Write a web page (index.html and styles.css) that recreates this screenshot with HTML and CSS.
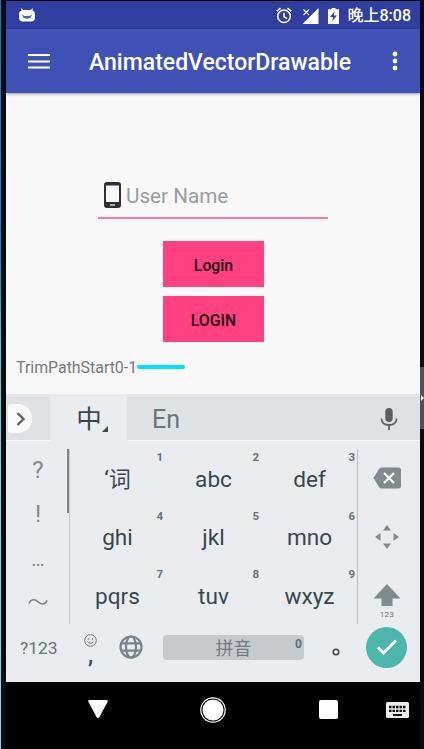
FILE: index.html
```html
<!DOCTYPE html>
<html lang="en">
<head>
<meta charset="utf-8">
<title>AnimatedVectorDrawable</title>
<link rel="stylesheet" href="styles.css">
</head>
<body>
<div class="desktop">
  <div class="phone">
    <header class="status">
      <svg class="bug" width="16" height="14" viewBox="0 0 16 14"><path fill="#fff" d="M2.200 0 4.300 2h7.400L13.800 0 13.500 2.400Q16 3 16 6v3.500q0 4-4 4H4Q0 13.500 0 9.500V6Q0 3 2.500 2.400z"/><path fill="#5562b2" d="M3 6.500 5.500 8h5L13 6.500 11.800 9.500Q8 12 4.200 9.500z"/></svg>
      <div class="tray">
        <svg width="16" height="17" viewBox="0 0 16 17"><g fill="none" stroke="#fff" stroke-width="1.500"><circle cx="8" cy="9.300" r="6.300"/><path d="M.8 4.200 4.500 1.200M15.200 4.200 11.500 1.200M8 5.800v4l3 1.700"/></g></svg>
        <svg width="17" height="16" viewBox="0 0 17 16"><path fill="#fff" d="M16.500 0v16H.5z"/><path stroke="#303f9f" stroke-width="2.600" d="m1.500 1.500 5.500 5.500M7 1.500 1.500 7"/><path stroke="#fff" stroke-width="1.200" d="m1.500 1.500 5.500 5.500M7 1.500 1.500 7"/></svg>
        <svg width="11" height="16" viewBox="0 0 11 16"><path fill="#fff" d="M3.500 0h4v1.300H11V16H0V1.300h3.500z"/><path fill="#303f9f" d="M6.500 3.500 2 9h3l-.7 4L9 7.600H6z"/></svg>
        <span class="clock">晚上8:08</span>
      </div>
    </header>
    <div class="toolbar">
      <svg width="22" height="16" viewBox="0 0 22 16"><path stroke="#fff" stroke-width="2" d="M0 2h22M0 8.500h22M0 14.500h22"/></svg>
      <h1>AnimatedVectorDrawable</h1>
      <svg width="6" height="20" viewBox="0 0 6 20"><g fill="#fff"><circle cx="3" cy="3" r="2.400"/><circle cx="3" cy="10" r="2.400"/><circle cx="3" cy="17" r="2.400"/></g></svg>
    </div>
    <main class="content">
      <div class="field">
        <svg width="17" height="26" viewBox="0 0 17 26"><path fill="#303034" fill-rule="evenodd" d="M3 0h11q3 0 3 3v20q0 3-3 3H3q-3 0-3-3V3Q0 0 3 0zM2 3.500v16.500h13V3.500z"/><path stroke="#fff" stroke-width="1.200" d="M6 23h5"/></svg>
        <span>User Name</span>
      </div>
      <div class="btn">Login</div>
      <div class="btn second">LOGIN</div>
      <div class="trim"><span>TrimPathStart0-1</span><i></i></div>
    </main>
    <section class="keyboard">
      <div class="strip">
        <div class="expand"><svg width="9" height="14" viewBox="0 0 9 14"><path fill="none" stroke="#606466" stroke-width="2.400" d="m1.500 1 6 6-6 6"/></svg></div>
        <div class="tab"><span>中</span><svg width="6" height="6" viewBox="0 0 6 6"><path fill="#37474f" d="M6 0v6H0z"/></svg></div>
        <span class="en">En</span>
        <svg class="mic" width="18" height="24" viewBox="0 0 18 24"><rect x="5.300" y="1" width="7.400" height="14" rx="3.700" fill="#5c5f61"/><path fill="none" stroke="#5c5f61" stroke-width="1.800" d="M1.500 11.500C1.500 16 5 18 9 18s7.500-2 7.500-6.500M9 18v5"/></svg>
      </div>
      <div class="keys">
        <div class="marks">
          <span>?</span><span>!</span><span class="dots">…</span>
          <svg width="20" height="8" viewBox="0 0 20 8"><path fill="none" stroke="#7f8b90" stroke-width="1.700" d="M.8 5.500C3 1 6 .5 10 3.800s7 3 9.200-1.500"/></svg>
        </div>
        <div class="grid">
          <div class="key"><span><span class="apos">‘</span><span class="han">词</span></span><b>1</b></div><div class="key"><span>abc</span><b>2</b></div><div class="key"><span>def</span><b>3</b></div>
          <div class="key"><span>ghi</span><b>4</b></div><div class="key"><span>jkl</span><b>5</b></div><div class="key"><span>mno</span><b>6</b></div>
          <div class="key"><span>pqrs</span><b>7</b></div><div class="key"><span>tuv</span><b>8</b></div><div class="key"><span>wxyz</span><b>9</b></div>
        </div>
        <div class="side">
          <div><svg width="28" height="22" viewBox="0 0 28 22"><path fill="#808b8f" d="M8.500.5H25.500Q28 .5 28 3v16q0 2.500-2.500 2.500H8.500Q7 21.500 6 20L.5 11 6 2Q7 .5 8.500.5z"/><path stroke="#fff" stroke-width="2.400" d="m11 6 10 10M21 6 11 16"/></svg></div>
          <div><svg width="24" height="24" viewBox="0 0 24 24"><path fill="#808b8f" d="m12 0 4 5.500H8zM12 24l-4-5.500h8zM0 12l5.500-4v8zM24 12l-5.500 4V8z"/></svg></div>
          <div class="shift"><svg width="28" height="22" viewBox="0 0 28 22"><path fill="#808b8f" d="m14 0 13.500 14.500H19.500V22h-11v-7.500H.5z"/></svg><span>123</span></div>
        </div>
      </div>
      <div class="bottom">
        <span class="num">?123</span>
        <div class="comma"><svg width="13" height="13" viewBox="0 0 13 13"><g fill="none" stroke="#69767b"><circle cx="6.500" cy="6.500" r="5.800"/><path d="M3.500 7.800q3 3.200 6 0"/></g><g fill="#69767b"><circle cx="4.500" cy="5" r=".8"/><circle cx="8.500" cy="5" r=".8"/></g></svg><span>,</span></div>
        <svg class="globe" width="24" height="24" viewBox="0 0 24 24"><g fill="none" stroke="#75858b" stroke-width="2.200"><circle cx="12" cy="12" r="10.500"/><ellipse cx="12" cy="12" rx="5" ry="10.500"/><path d="M2 8.300h20M2 15.700h20"/></g></svg>
        <div class="space"><span>拼音</span><b>0</b></div>
        <svg class="period" width="8" height="8" viewBox="0 0 8 8"><circle cx="4" cy="4" r="2.800" fill="none" stroke="#37474f" stroke-width="1.500"/></svg>
        <div class="enter"><svg width="20" height="16" viewBox="0 0 20 16"><path fill="none" stroke="#fff" stroke-width="2.800" d="m1 8.500 5.500 5.500L19 1.500"/></svg></div>
      </div>
    </section>
    <nav class="nav">
      <svg class="back" width="20" height="19" viewBox="0 0 20 19"><path fill="#fff" d="M1.500 0h17q2 0 1 2l-8.300 15.500q-1.200 1.500-2.400 0L.5 2q-1-2 1-2z"/></svg>
      <svg class="home" width="26" height="26" viewBox="0 0 26 26"><circle cx="13" cy="13" r="12.200" fill="none" stroke="#fff" stroke-width="1.200"/><circle cx="13" cy="13" r="10.500" fill="#fff"/></svg>
      <div class="recent"></div>
      <svg class="ime" width="23" height="16" viewBox="0 0 23 16"><rect width="23" height="16" rx="1.500" fill="#f1ecee"/><path stroke="#111" stroke-width="2.300" stroke-dasharray="2.500 1" d="M3 5h17M3 8.800h17"/><path stroke="#111" stroke-width="2" d="M7 13h9"/></svg>
    </nav>
  </div>
  <aside class="edge"><div class="handle"><svg width="3" height="6" viewBox="0 0 3 6"><path fill="#fff" d="m0 0 3 3-3 3z"/></svg></div></aside>
</div>
</body>
</html>
```
FILE: styles.css
```css
* { box-sizing: border-box; }
body { margin: 0; background: #000; font-family: Roboto, "Noto Sans CJK SC", sans-serif; }
svg { display: block; flex: none; }
.desktop {
  display: flex; width: 424px; height: 749px; overflow: hidden;
  background: linear-gradient(#0878d0, #1488df 35%, #55c8f0 46%, #72e2fa 70%, #80dcf5);
}
.phone { width: 419px; margin-left: 1px; border-left: 5px solid #080b10; border-top: 1px solid #000; display: flex; flex-direction: column; flex: none; }
.edge { width: 4px; background: #0a0b12; padding-top: 367px; }
.handle { width: 4px; height: 62px; background: #4b505c; display: flex; align-items: center; padding-left: 1px; }

.status { height: 28px; background: #303f9f; display: flex; align-items: center; padding: 2px 9px 0 13px; color: #fff; }
.bug { margin-top: -2px; }
.tray { margin-left: auto; display: flex; align-items: center; gap: 9.500px; }
.tray svg { margin-top: -1px; }
.clock { font-size: 16px; line-height: 20px; font-weight: 500; margin-left: -1.500px; white-space: nowrap; }
.toolbar { height: 64px; background: #3f51b5; display: flex; align-items: center; padding: 0 22px 0 22px; color: #fff; box-shadow: 0 1px 3px rgba(0,0,0,.4); z-index: 1; }
.toolbar h1 { margin: 4px auto 0 39px; font-size: 23px; line-height: 28px; font-weight: 500; white-space: nowrap; }

.content { height: 301px; background: #f8f8f8; display: flex; flex-direction: column; align-items: center; padding-top: 81px; }
.field { width: 230px; height: 44px; border-bottom: 1.500px solid #f77ba4; display: flex; align-items: center; gap: 5px; padding-left: 6px; color: #999da0; font-size: 20.700px; }
.field { height: 45px; padding-bottom: 2px; border-bottom-width: 2px; }
.field span { line-height: 24px; margin-top: 2px; }
.btn { width: 101px; height: 46px; margin-top: 22px; background: #ff4081; color: #1c0810; font-size: 15.800px; font-weight: 500; display: flex; align-items: center; justify-content: center; padding: 2px 0 0 1px; }
.btn.second { margin-top: 9px; }
.trim { align-self: flex-start; display: flex; align-items: center; margin: 16px 0 0 10px; color: #77797b; font-size: 15.900px; line-height: 20px; }
.trim i { width: 48px; height: 4px; border-radius: 2px; background: #00e0ff; margin-top: -2px; }

.keyboard { height: 288px; background: #eaedef; color: #37474f; display: flex; flex-direction: column; }
.strip { height: 47px; background: #dfe2e5; border-top: 3px solid #e5e8ea; border-bottom: 1px solid #f7f8f8; display: flex; align-items: center; }
.expand { width: 24px; height: 29px; margin-left: 2px; background: #f9f9f9; border-radius: 3px 14px 14px 3px; display: flex; align-items: center; padding-left: 8px; }
.tab { width: 77px; height: 45px; margin: 0 0 -1px 18px; background: #eaedef; display: flex; align-items: center; justify-content: center; font-size: 25.500px; padding-left: 7px; }
.tab span { line-height: 30px; margin-top: -1px; }
.tab svg { margin: 20px 0 0 0; }
.en { font-size: 25px; color: #68757a; margin: 1px auto 0 25px; }
.mic { margin-right: 22px; }

.keys { display: flex; height: 183px; padding-top: 8px; }
.marks { width: 64px; display: flex; flex-direction: column; align-items: center; color: #7f8b90; font-size: 24px; border-right: 1px solid #c5cacd; background: linear-gradient(#7c8588, #7c8588) right top / 2px 64px no-repeat; }
.marks span { height: 44px; line-height: 43px; padding-left: 1px; }
.marks .dots { font-size: 20px; height: 61px; line-height: 44px; }
.grid { width: 288px; display: grid; grid-template-columns: repeat(3, 96px); grid-template-rows: repeat(3, 58.500px); border-right: 1px solid #b9bfc2; }
.key { position: relative; display: flex; align-items: center; justify-content: center; font-size: 22.600px; line-height: 27px; padding: 2px 1px 0 0; }
.han { font-size: 22px; }
.key b { position: absolute; right: 3px; top: 1px; font-size: 11.500px; line-height: 14px; font-weight: 700; color: #687479; }
.side { width: 61px; display: grid; grid-template-rows: repeat(3, 58.500px); padding-right: 3px; }
.side div { display: flex; align-items: center; justify-content: center; }
.side .shift { flex-direction: column; padding-top: 13px; }
.shift span { font-size: 8px; line-height: 10px; margin-top: 4px; letter-spacing: .3px; color: #68757a; }
.bottom { height: 58px; display: flex; align-items: center; padding: 0 13px 12px 14px; }
.num { width: 38px; font-size: 17.400px; color: #68757a; margin-top: 1px; white-space: nowrap; }
.comma { width: 13px; margin-left: 26px; display: flex; flex-direction: column; align-items: center; font-size: 23px; font-weight: 500; }
.comma span { line-height: 24px; margin-top: -3px; }
.comma svg { margin-top: 7px; }
.globe { margin-left: 22px; }
.space { width: 141px; height: 25px; margin-left: 20px; background: #c5cacf; border-radius: 4px; position: relative; text-align: center; font-size: 18px; line-height: 27px; color: #707c82; }
.space b { position: absolute; right: 2px; top: 2px; font-size: 12px; line-height: 14px; color: #5f6c72; }
.period { margin: 10px 0 0 28px; }
.enter { width: 41px; height: 41px; flex: none; margin-left: auto; border-radius: 50%; background: #4db6ac; display: flex; align-items: center; justify-content: center; }

.nav { height: 67px; background: #000; display: flex; align-items: center; padding: 0 11px 12px 82px; }
.home { margin-left: 92px; }
.recent { width: 19px; height: 19px; background: #fff; border-radius: 2px; margin-left: 93px; }
.ime { margin-left: auto; }
```
